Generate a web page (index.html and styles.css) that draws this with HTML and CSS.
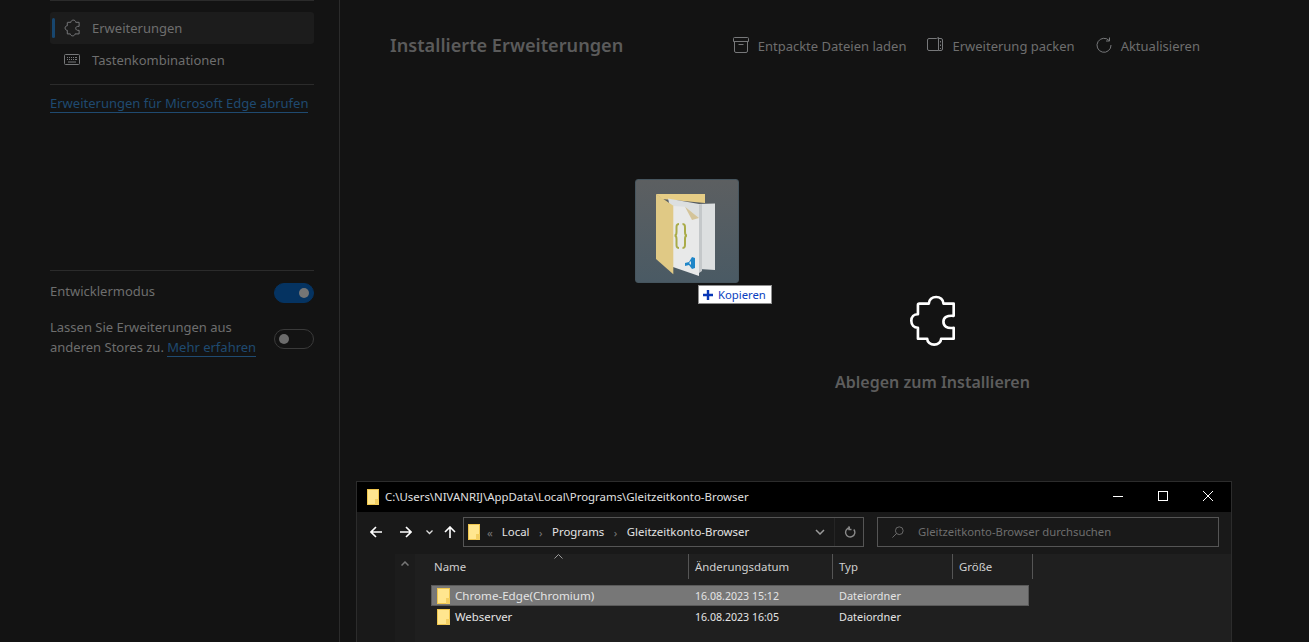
FILE: index.html
```html
<!DOCTYPE html>
<html lang="de">
<head>
<meta charset="utf-8">
<title>Erweiterungen</title>
<link rel="stylesheet" href="styles.css">
</head>
<body>
<div class="page">
  <aside class="sidebar">
    <div class="top-rule"></div>
    <nav class="nav">
      <a class="nav-item active">
        <svg class="nav-icon" viewBox="262 42 146 160" width="16" height="18" fill="none" stroke="#77787a" stroke-width="9" stroke-linejoin="round"><path d="M296 70H325C325 58 335 50 347 50C359 50 369 58 369 70H400V107C380 105 369 112 369 125C369 138 380 146 400 143V176H362C362 186 352 194 341 194C330 194 320 186 320 176H292V143C280 143 272 134 272 122C272 110 280 102 292 102V74Q292 70 296 70Z"/></svg>
        <span>Erweiterungen</span>
      </a>
      <a class="nav-item">
        <svg class="nav-icon" viewBox="0 0 16 12" width="16" height="12" fill="none" stroke="#77787a" stroke-width="1"><rect x=".5" y=".5" width="15" height="10" rx="1"/><path d="M3 3.500h1M5 3.500h1M7 3.500h1M9 3.500h1M11 3.500h2M3 5.500h1M5 5.500h1M7 5.500h1M9 5.500h1M11 5.500h2M4 8h8"/></svg>
        <span>Tastenkombinationen</span>
      </a>
    </nav>
    <div class="rule"></div>
    <div class="store-link"><a class="link">Erweiterungen für Microsoft Edge abrufen</a></div>
    <div class="rule dev-rule"></div>
    <div class="setting first">
      <span>Entwicklermodus</span>
      <span class="toggle on"><i></i></span>
    </div>
    <div class="setting second">
      <span>Lassen Sie Erweiterungen aus<br>anderen Stores zu. <a class="link">Mehr erfahren</a></span>
      <span class="toggle"><i></i></span>
    </div>
  </aside>

  <main class="main">
    <header class="header">
      <h1>Installierte Erweiterungen</h1>
      <div class="actions">
        <a class="action">
          <svg viewBox="0 0 16 16" width="16" height="16" fill="none" stroke="#77787a"><path d="M1.500.5h13a1 1 0 0 1 1 1v3H.5v-3a1 1 0 0 1 1-1zM1.500 4.500V14a1.500 1.500 0 0 0 1.500 1.500h10a1.500 1.500 0 0 0 1.500-1.500V4.500M5.500 7.500h5"/></svg>
          <span>Entpackte Dateien laden</span>
        </a>
        <a class="action">
          <svg viewBox="0 0 16 15" width="16" height="15" fill="none" stroke="#77787a"><path d="M.5 3A1.500 1.500 0 0 1 2 1.500h7.500l2-1v13H2A1.500 1.500 0 0 1 .5 12zM11.500 1.500H14A1.500 1.500 0 0 1 15.500 3v9a1.500 1.500 0 0 1-1.500 1.500h-2.500M13.500 4v1.500M13.500 7.500V9M13.500 11v1"/></svg>
          <span>Erweiterung packen</span>
        </a>
        <a class="action">
          <svg viewBox="0 0 16 16" width="16" height="16" fill="none" stroke="#77787a"><path d="M13.200 3.600A7 7 0 1 0 15 8M13.500.5v3.500H10"/></svg>
          <span>Aktualisieren</span>
        </a>
      </div>
    </header>
    <section class="drop">
      <svg class="drop-icon" viewBox="265 42 142 158" width="47" height="53" fill="none" stroke="#fff" stroke-width="8" stroke-linejoin="round"><path d="M296 70H325C325 58 335 50 347 50C359 50 369 58 369 70H400V107C380 105 369 112 369 125C369 138 380 146 400 143V176H362C362 186 352 194 341 194C330 194 320 186 320 176H292V143C280 143 272 134 272 122C272 110 280 102 292 102V74Q292 70 296 70Z"/></svg>
      <p>Ablegen zum Installieren</p>
    </section>
  </main>
</div>

<div class="drag-ghost">
  <svg viewBox="0 0 72 84" width="72" height="84">
    <path d="M1 0H50V9L7 5z" fill="#e6cd86"/>
    <path d="M13 4.500L44 10 60 9.500V76L44 75H30z" fill="#dcdfe0"/>
    <path d="M44 10.500L47 10V77L44 79z" fill="#c4c8ca"/>
    <path d="M18 12L30 12.700 44 24V82L18 73z" fill="#e8e9e9"/>
    <path d="M30 12.700L37 26 44 24z" fill="#d4c49a"/>
    <path d="M1 0L18.300 11.700V80.300L1 65z" fill="#e0c985"/>
    <path d="M24 30c-2.500 0-2.500 1.500-2.500 4v4c0 2-1 3.500-2 3.500 1 0 2 1.500 2 3.500v5c0 2.500 0 4 2.500 4M27.500 30c2.500 0 2.500 1.500 2.500 4v4c0 2 1 3.500 2 3.500-1 0-2 1.500-2 3.500v5c0 2.500 0 4-2.500 4" fill="none" stroke="#a9ab48" stroke-width="2"/>
    <path d="M30 69l4-1 3-5 3 1v10l-3 1-3-4-4 1zM36 67v4l-2-2z" fill="#1f86c8" fill-rule="evenodd"/>
  </svg>
</div>
<div class="copy-tip">
  <svg viewBox="0 0 10 10" width="10" height="10" stroke="#0636b5" stroke-width="2.400" fill="none"><path d="M0 5h10M5 0v10"/></svg>
  <span>Kopieren</span>
</div>

<div class="explorer">
  <div class="titlebar">
    <span class="folder"></span>
    <span class="title">C:\Users\NIVANRIJ\AppData\Local\Programs\Gleitzeitkonto-Browser</span>
    <div class="window-controls">
      <svg viewBox="0 0 10 10" width="10" height="10" stroke="#fff" fill="none"><path d="M0 5.500h10"/></svg>
      <svg viewBox="0 0 10 10" width="10" height="10" stroke="#fff" fill="none"><rect x=".5" y=".5" width="9" height="9"/></svg>
      <svg viewBox="0 0 10 10" width="10" height="10" stroke="#fff" fill="none"><path d="M0 0l10 10M10 0L0 10"/></svg>
    </div>
  </div>
  <div class="toolbar">
    <div class="nav-buttons">
      <svg class="back" viewBox="0 0 12 12" width="12" height="12" stroke="#fff" stroke-width="1.600" fill="none"><path d="M12 6H1M6 1L1 6l5 5"/></svg>
      <svg class="forward" viewBox="0 0 12 12" width="12" height="12" stroke="#fff" stroke-width="1.600" fill="none"><path d="M0 6h11M6 1l5 5-5 5"/></svg>
      <svg class="mini" viewBox="0 0 7 5" width="7" height="5" stroke="#ddd" stroke-width="1.300" fill="none"><path d="M.5 .5l3 3 3-3"/></svg>
      <svg class="up" viewBox="0 0 12 12" width="12" height="12" stroke="#fff" stroke-width="1.600" fill="none"><path d="M6 12V1M1 6l5-5 5 5"/></svg>
    </div>
    <div class="address">
      <span class="folder"></span>
      <span class="chev-l">«</span>
      <span class="crumb">Local</span><span class="sep">›</span>
      <span class="crumb">Programs</span><span class="sep">›</span>
      <span class="crumb">Gleitzeitkonto-Browser</span>
      <span class="address-end">
        <svg viewBox="0 0 10 6" width="10" height="6" stroke="#9a9a9a" stroke-width="1.500" fill="none"><path d="M1 1l4 4 4-4"/></svg>
        <i></i>
        <svg viewBox="0 0 12 12" width="12" height="12" stroke="#8a8a8a" stroke-width="1.400" fill="none"><path d="M9.800 3.500A4.600 4.600 0 1 1 6 1.800M5 .2v3.300h2.500"/></svg>
      </span>
    </div>
    <div class="search">
      <svg viewBox="0 0 14 14" width="12" height="12" stroke="#777" fill="none"><circle cx="8.500" cy="5.500" r="4.500"/><path d="M5.300 8.700L.5 13.500"/></svg>
      <span class="search-text">Gleitzeitkonto-Browser durchsuchen</span>
    </div>
  </div>
  <div class="content">
    <div class="tree-pane"><svg viewBox="0 0 8 5" width="8" height="5" stroke="#777" stroke-width="1.500" fill="none"><path d="M.5 4.500L4 1l3.500 3.500"/></svg></div>
    <div class="files">
      <svg class="sort" viewBox="0 0 9 5" width="9" height="5" stroke="#9a9a9a" fill="none"><path d="M.5 4.500L4.500.5l4 4"/></svg>
      <div class="cols">
        <span class="col c-name">Name</span>
        <span class="col c-date">Änderungsdatum</span>
        <span class="col c-type">Typ</span>
        <span class="col c-size">Größe</span>
      </div>
      <div class="row selected">
        <span class="c-name cell-name"><span class="folder"></span>Chrome-Edge(Chromium)</span>
        <span class="c-date cell-date">16.08.2023 15:12</span>
        <span class="c-type cell-type">Dateiordner</span>
      </div>
      <div class="row">
        <span class="c-name cell-name"><span class="folder"></span>Webserver</span>
        <span class="c-date cell-date">16.08.2023 16:05</span>
        <span class="c-type cell-type">Dateiordner</span>
      </div>
    </div>
  </div>
</div>
</body>
</html>
```
FILE: styles.css
```css
* { box-sizing: border-box; }
html, body { margin: 0; height: 100%; overflow: hidden; }
body {
  background: #131313;
  color: #6e6e6e;
  font-family: "Noto Sans", "Open Sans", Arial, sans-serif;
  font-size: 13px;
}
a { color: inherit; text-decoration: none; }
.page { display: flex; height: 642px; }

.sidebar {
  width: 340px;
  flex: none;
  padding: 0 25px 0 50px;
  border-right: 1px solid #2b2b2b;
}
.top-rule { height: 2px; border-top: 1px solid #2b2b2b; margin-bottom: 10px; }
.nav { display: flex; flex-direction: column; }
.nav-item {
  position: relative;
  display: flex;
  align-items: center;
  gap: 12px;
  height: 32px;
  padding-left: 14px;
  border-radius: 3px;
}
.nav-item.active { background: #1c1c1c; }
.nav-item.active::before {
  content: "";
  position: absolute;
  left: 2px;
  top: 6px;
  width: 3px;
  height: 20px;
  border-radius: 2px;
  background: #18466e;
}
.rule { height: 1px; background: #2b2b2b; margin-top: 8px; }
.store-link { margin-top: 8px; line-height: 21px; }
.link { color: #1f4a70; border-bottom: 1px solid #1f4a70; }
.dev-rule { margin-top: 156px; }
.setting { display: flex; justify-content: space-between; }
.setting.first { margin-top: 11px; height: 26px; }
.setting.second { margin-top: 9px; line-height: 20px; align-items: center; }
.toggle {
  position: relative;
  display: block;
  width: 40px;
  height: 20px;
  flex: none;
  border-radius: 10px;
  border: 1px solid #3a3a3a;
}
.first .toggle { margin-top: 1px; }
.second .toggle { margin-top: 4px; }
.toggle i {
  position: absolute;
  top: 4px;
  left: 4px;
  width: 10px;
  height: 10px;
  border-radius: 50%;
  background: #6c6c6c;
}
.toggle.on { background: #053361; border-color: #053361; }
.toggle.on i { left: auto; right: 4px; background: #757575; }

.main { flex: 1; padding: 0 109px 0 50px; }
.header { display: flex; align-items: center; justify-content: space-between; height: 91px; }
.header h1 { margin: 0 0 2px; font-size: 18.160px; font-weight: 600; color: #5b5b5b; }
.actions { display: flex; gap: 21px; }
.action { display: flex; align-items: center; gap: 9px; }
.action svg { margin-bottom: 2px; }
.drop { margin: 203px 0 0 430px; width: 225px; display: flex; flex-direction: column; align-items: center; }
.drop p { margin: 24px 0 0; font-size: 16px; font-weight: 600; color: #5d5d5d; }

.drag-ghost {
  position: absolute;
  left: 635px;
  top: 179px;
  width: 104px;
  height: 104px;
  padding: 14px 0 0 19px;
  border: 1px solid #46555e;
  border-radius: 3px;
  background: linear-gradient(#5c5f61, #4a5a64);
}
.drag-ghost svg { display: block; }
.copy-tip {
  position: absolute;
  left: 698px;
  top: 285px;
  width: 74px;
  height: 19px;
  display: flex;
  align-items: center;
  gap: 5px;
  padding-left: 4px;
  background: #fff;
  border: 1px solid #8f8f8f;
  color: #0a3fbf;
  font-size: 11.300px;
}

.explorer {
  position: absolute;
  left: 356px;
  top: 481px;
  width: 876px;
  height: 161px;
  background: #191919;
  border: 1px solid #2c2c2c;
  border-bottom: 0;
  color: #fff;
  font-size: 11.400px;
}
.folder {
  position: relative;
  display: block;
  flex: none;
  width: 12px;
  height: 16px;
  background: #ffe68f;
  border: 1px solid #f0c64e;
}
.folder::after {
  content: "";
  position: absolute;
  right: -1px;
  bottom: -1px;
  width: 4px;
  height: 6px;
  background: #f3cf62;
}
.titlebar { display: flex; align-items: center; gap: 6px; height: 30px; background: #000; padding-left: 10px; }
.title { color: #e0e0e0; padding-bottom: 2px; }
.window-controls { margin-left: auto; margin-bottom: 2px; display: flex; gap: 35px; padding-right: 18px; }
.toolbar { display: flex; align-items: flex-start; height: 42px; padding: 5px 12px 0 13px; background: #191919; }
.nav-buttons { display: flex; align-items: center; height: 30px; width: 93px; }
.nav-buttons .forward { margin-left: 18px; }
.nav-buttons .mini { margin-left: 14px; }
.nav-buttons .up { margin-left: 11px; }
.address {
  display: flex;
  align-items: center;
  width: 401px;
  height: 30px;
  border: 1px solid #555;
  padding-left: 4px;
  color: #e4e4e4;
}
.crumb { padding-bottom: 2px; }
.chev-l { color: #777; margin: 0 9px 0 7px; }
.sep { color: #777; margin: 0 9.500px; }
.address-end { margin-left: auto; display: flex; align-items: center; gap: 9px; padding-right: 7px; }
.address-end i { width: 1px; height: 28px; background: #252525; }
.search {
  display: flex;
  align-items: center;
  gap: 14px;
  margin-left: 13px;
  width: 342px;
  height: 30px;
  border: 1px solid #555;
  padding-left: 14px;
  color: #6e6e6e;
  font-size: 11.300px;
}
.search-text { padding-bottom: 2px; }
.content { display: flex; height: 88px; background: #1f1f1f; }
.tree-pane {
  width: 58px;
  padding: 7px 0 0 44px;
  background: linear-gradient(to right, #191919 38px, #1c1c1c 38px);
}
.tree-pane svg { display: block; }
.files { position: relative; flex: 1; padding-left: 16px; }
.sort { position: absolute; left: 139px; top: 0; }
.cols { display: flex; height: 25px; color: #d0d0d0; }
.col { display: flex; align-items: center; border-right: 1px solid #555; padding-bottom: 1px; }
.c-name { width: 258px; padding-left: 3px; }
.c-date { width: 144px; padding-left: 6px; }
.c-type { width: 120px; padding-left: 6px; }
.c-size { width: 80px; padding-left: 6px; }
.row { display: flex; align-items: center; width: 598px; height: 21px; color: #e4e4e4; }
.row.selected { margin-top: 6px; background: #777; box-shadow: inset 0 0 0 1px #5a5a5a; }
.row.selected .cell-name { font-size: 11.600px; }
.cell-name { display: flex; align-items: center; gap: 5px; padding-left: 6px; }
.cell-name .folder { width: 13px; }
.cell-date { font-size: 10.600px; }
.cell-type { font-size: 10.900px; }
```
